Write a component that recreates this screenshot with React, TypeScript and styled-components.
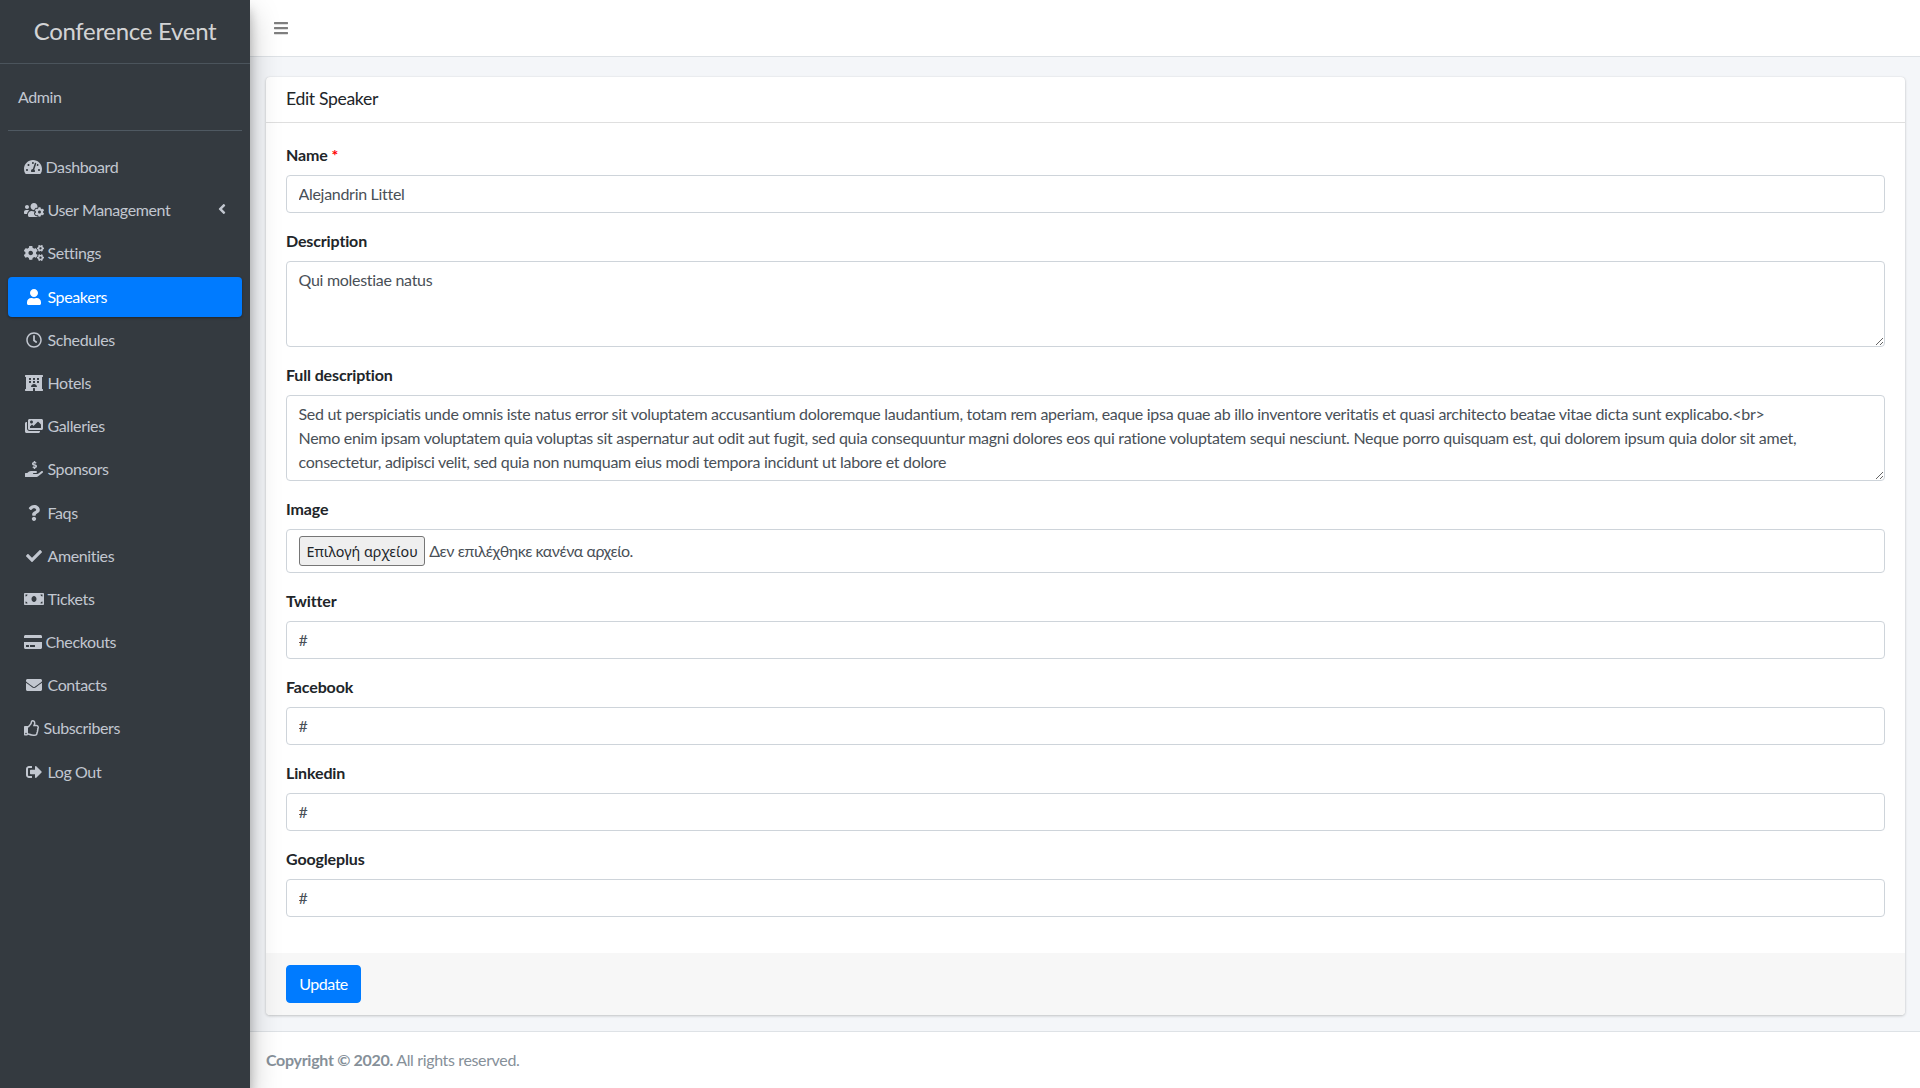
import React from "react";
import styled, { createGlobalStyle } from "styled-components";
import {
  FaTachometerAlt, FaUsersCog, FaCogs, FaUser, FaRegClock, FaHotel, FaImages, FaHandHoldingUsd,
  FaQuestion, FaCheck, FaMoneyBill, FaCreditCard, FaEnvelope, FaRegThumbsUp, FaSignOutAlt, FaAngleLeft, FaBars,
} from "react-icons/fa";

const Global = createGlobalStyle`
  * { box-sizing: border-box; }
  html, body { margin: 0; padding: 0; }
  body { font-family: "Lato", "Noto Sans", sans-serif; font-size: 16px; line-height: 24px; color: #212529; background: #f4f6f9; letter-spacing: -0.3px; }
`;

const Shell = styled.div`display: flex; min-height: 1088px;`;
const Sidebar = styled.aside`
  width: 250px; flex: none; background: #343a40; position: relative; z-index: 2;
  box-shadow: 0 14px 28px rgba(0,0,0,.25), 0 10px 10px rgba(0,0,0,.22);
`;
const Brand = styled.div`
  height: 64px; padding-bottom: 2px; border-bottom: 1px solid #4b545c; color: rgba(255,255,255,.8);
  font-size: 24px; display: flex; align-items: center; justify-content: center;
`;
const SideInner = styled.div`padding: 0 8px;`;
const UserPanel = styled.div`
  padding: 21px 10px; border-bottom: 1px solid #4f5962; color: #c2c7d0; letter-spacing: -0.4px;
`;
const Nav = styled.nav`margin-top: 16px; display: flex; flex-direction: column; gap: 3.2px; letter-spacing: -0.38px;`;
const NavLink = styled.a<{ $active?: boolean }>`
  height: 40px; padding: 0 16px; border-radius: 4px; display: flex; align-items: center;
  color: ${(p) => (p.$active ? "#fff" : "#c2c7d0")};
  background: ${(p) => (p.$active ? "#007bff" : "transparent")};
  box-shadow: ${(p) => (p.$active ? "0 1px 3px rgba(0,0,0,.12), 0 1px 2px rgba(0,0,0,.24)" : "none")};
`;
const NavIcon = styled.span<{ $w: number; $fw?: boolean }>`
  display: inline-flex; justify-content: center; align-items: center; margin-right: 3.5px; flex: none;
  width: ${(p) => (p.$fw ? 20 : p.$w)}px;
  svg { width: ${(p) => p.$w}px; height: 16px; flex: none; }
`;
const Chevron = styled.span`
  margin-left: auto; display: inline-flex; margin-top: -2px;
  svg { width: 8px; height: 16px; }
`;

const Main = styled.div`flex: 1; min-width: 0; display: flex; flex-direction: column;`;
const TopBar = styled.header`
  height: 57px; background: #fff; border-bottom: 1px solid #dee2e6; padding: 0 24px; display: flex; align-items: center;
  color: rgba(0,0,0,.5);
  svg { width: 14px; height: 16px; }
`;
const Content = styled.main`flex: 1; padding: 20px 15px 16px 16px;`;
const Card = styled.section`
  background: #fff; border-radius: 4px; box-shadow: 0 0 1px rgba(0,0,0,.125), 0 1px 3px rgba(0,0,0,.2);
`;
const CardHeader = styled.div`
  height: 46px; padding: 0 20px 1px; border-bottom: 1px solid rgba(0,0,0,.125); display: flex; align-items: center; font-size: 17.6px; letter-spacing: -0.34px;
`;
const CardBody = styled.div`padding: 20px 20px 20px;`;
const Group = styled.div`margin-bottom: 16px;`;
const Label = styled.label`display: block; font-weight: 700; margin-bottom: 8px; height: 24px; letter-spacing: -0.14px;`;
const Req = styled.span`color: #f00;`;
const Input = styled.input`
  display: block; width: 100%; height: 38px; padding: 5px 12px 7px 11.5px; border: 1px solid #ced4da; border-radius: 4px;
  font: inherit; letter-spacing: inherit; color: #495057; background: #fff; outline: none;
`;
const Area = styled.textarea`
  display: block; width: 100%; height: 86px; padding: 6px 12px 6px 11.5px; border: 1px solid #ced4da; border-radius: 4px;
  font: inherit; letter-spacing: -0.29px; color: #495057; background: #fff; outline: none; overflow: hidden; resize: vertical; white-space: pre;
`;
const FileBox = styled.div`
  height: 44px; padding: 0 12px; border: 1px solid #ced4da; border-radius: 4px; display: flex; align-items: center; color: #495057; letter-spacing: -0.46px;
`;
const FileButton = styled.button`
  height: 30px; padding: 0 6.5px; margin-right: 4px; border: 1px solid #767676; border-radius: 3px; background: #efefef; color: #212529;
  font-family: "Noto Sans", sans-serif; font-size: 14.3px; letter-spacing: 0;
`;
const CardFooter = styled.div`padding: 12px 20px; background: #f7f7f7; border-radius: 0 0 4px 4px;`;
const Primary = styled.button`
  height: 38px; width: 75px; padding: 0; border: 1px solid #007bff; border-radius: 4px; background: #007bff; color: #fff; font: inherit; letter-spacing: -0.45px;
`;
const Footer = styled.footer`
  background: #fff; border-top: 1px solid #dee2e6; padding: 16px; color: #869099; height: 57px; letter-spacing: -0.36px;
`;
const Strong = styled.strong`letter-spacing: -0.3px;`;

const items: { label: string; icon: React.ReactNode; w: number; fw?: boolean; active?: boolean; chevron?: boolean }[] = [
  { label: "Dashboard", icon: <FaTachometerAlt />, w: 18 },
  { label: "User Management", icon: <FaUsersCog />, w: 20, chevron: true },
  { label: "Settings", icon: <FaCogs />, w: 20 },
  { label: "Speakers", icon: <FaUser />, w: 14, fw: true, active: true },
  { label: "Schedules", icon: <FaRegClock />, w: 16, fw: true },
  { label: "Hotels", icon: <FaHotel />, w: 18, fw: true },
  { label: "Galleries", icon: <FaImages />, w: 18, fw: true },
  { label: "Sponsors", icon: <FaHandHoldingUsd />, w: 18, fw: true },
  { label: "Faqs", icon: <FaQuestion />, w: 12, fw: true },
  { label: "Amenities", icon: <FaCheck />, w: 16, fw: true },
  { label: "Tickets", icon: <FaMoneyBill />, w: 20 },
  { label: "Checkouts", icon: <FaCreditCard />, w: 18 },
  { label: "Contacts", icon: <FaEnvelope />, w: 16, fw: true },
  { label: "Subscribers", icon: <FaRegThumbsUp />, w: 16 },
  { label: "Log Out", icon: <FaSignOutAlt />, w: 16, fw: true },
];

const fullDescription =
  "Sed ut perspiciatis unde omnis iste natus error sit voluptatem accusantium doloremque laudantium, totam rem aperiam, eaque ipsa quae ab illo inventore veritatis et quasi architecto beatae vitae dicta sunt explicabo.<br>\nNemo enim ipsam voluptatem quia voluptas sit aspernatur aut odit aut fugit, sed quia consequuntur magni dolores eos qui ratione voluptatem sequi nesciunt. Neque porro quisquam est, qui dolorem ipsum quia dolor sit amet,\nconsectetur, adipisci velit, sed quia non numquam eius modi tempora incidunt ut labore et dolore";

export default function App() {
  return (
    <Shell>
      <Global />
      <Sidebar>
        <Brand>Conference Event</Brand>
        <SideInner>
          <UserPanel>Admin</UserPanel>
          <Nav>
            {items.map((it) => (
              <NavLink key={it.label} $active={it.active}>
                <NavIcon $w={it.w} $fw={it.fw}>{it.icon}</NavIcon>
                {it.label}
                {it.chevron && <Chevron><FaAngleLeft /></Chevron>}
              </NavLink>
            ))}
          </Nav>
        </SideInner>
      </Sidebar>
      <Main>
        <TopBar><FaBars /></TopBar>
        <Content>
          <Card>
            <CardHeader>Edit Speaker</CardHeader>
            <CardBody>
              <Group>
                <Label>Name <Req>*</Req></Label>
                <Input readOnly value="Alejandrin Littel" />
              </Group>
              <Group>
                <Label>Description</Label>
                <Area readOnly value="Qui molestiae natus" />
              </Group>
              <Group>
                <Label>Full description</Label>
                <Area readOnly value={fullDescription} />
              </Group>
              <Group>
                <Label>Image</Label>
                <FileBox>
                  <FileButton type="button">Επιλογή αρχείου</FileButton>
                  Δεν επιλέχθηκε κανένα αρχείο.
                </FileBox>
              </Group>
              {["Twitter", "Facebook", "Linkedin", "Googleplus"].map((l) => (
                <Group key={l}>
                  <Label>{l}</Label>
                  <Input readOnly value="#" />
                </Group>
              ))}
            </CardBody>
            <CardFooter><Primary type="button">Update</Primary></CardFooter>
          </Card>
        </Content>
        <Footer><Strong>Copyright © 2020.</Strong> All rights reserved.</Footer>
      </Main>
    </Shell>
  );
}
